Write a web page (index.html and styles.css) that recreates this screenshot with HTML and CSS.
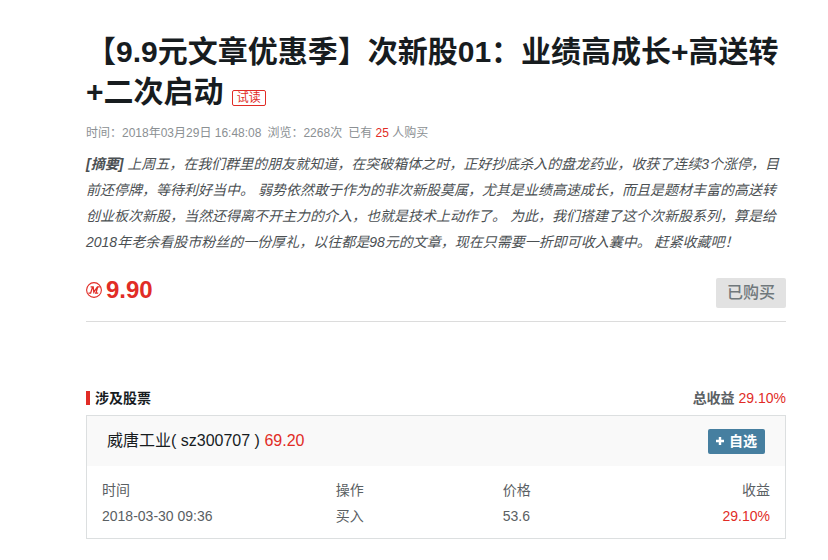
FILE: index.html
```html
<!DOCTYPE html>
<html lang="zh-CN">
<head>
<meta charset="utf-8">
<meta name="viewport" content="width=device-width, initial-scale=1">
<title>次新股01：业绩高成长+高送转+二次启动</title>
<link rel="stylesheet" href="styles.css">
</head>
<body>
<main class="page">
  <article class="article">
    <h1 class="title">【9.9元文章优惠季】次新股01：业绩高成长+高送转+二次启动 <span class="tag">试读</span></h1>
    <p class="meta"><span>时间：2018年03月29日 16:48:08</span><span>浏览：2268次</span><span>已有 <b class="count">25</b> 人购买</span></p>
    <p class="summary"><strong>[摘要]</strong> 上周五，在我们群里的朋友就知道，在突破箱体之时，正好抄底杀入的盘龙药业，收获了连续3个涨停，目前还停牌，等待利好当中。 弱势依然敢于作为的非次新股莫属，尤其是业绩高速成长，而且是题材丰富的高送转创业板次新股，当然还得离不开主力的介入，也就是技术上动作了。 为此，我们搭建了这个次新股系列，算是给2018年老余看股市粉丝的一份厚礼，以往都是98元的文章，现在只需要一折即可收入囊中。 赶紧收藏吧！</p>
    <div class="purchase">
      <div class="price">
        <svg class="coin" viewBox="0 0 16 16" aria-hidden="true">
          <circle cx="8" cy="8" r="7.4" fill="none" stroke="currentColor" stroke-width="1.1"/>
          <path d="M2.4 11.2h2.2L6.6 5M4.6 4.8h2.6l.6 5.4 3.6-5.4h2.4M11.6 5l-1.6 6.2M8.8 11.2h3.4" fill="none" stroke="currentColor" stroke-width="1.3"/>
        </svg>
        <span>9.90</span>
      </div>
      <button class="bought" type="button">已购买</button>
    </div>
  </article>
  <section class="stocks">
    <header class="stocks-head">
      <h2 class="stocks-title">涉及股票</h2>
      <p class="total"><strong>总收益</strong> <span class="up">29.10%</span></p>
    </header>
    <div class="card">
      <div class="card-head">
        <p class="stock">威唐工业( sz300707 ) <span class="up">69.20</span></p>
        <button class="add" type="button">
          <svg class="plus" viewBox="0 0 8 8" aria-hidden="true"><path d="M4 0v8M0 4h8" stroke="currentColor" stroke-width="2.4"/></svg>
          <span>自选</span>
        </button>
      </div>
      <div class="card-body">
        <table class="trades">
          <thead>
            <tr><th class="col-time" scope="col">时间</th><th class="col-action" scope="col">操作</th><th scope="col">价格</th><th class="gain" scope="col">收益</th></tr>
          </thead>
          <tbody>
            <tr><td>2018-03-30 09:36</td><td>买入</td><td>53.6</td><td class="gain up">29.10%</td></tr>
          </tbody>
        </table>
      </div>
    </div>
  </section>
</main>
</body>
</html>
```

FILE: styles.css
```css
* {
  box-sizing: border-box;
}

body {
  margin: 0;
  background: #fff;
  color: #5a6063;
  font: 14px/26px "Liberation Sans", "Noto Sans CJK SC", sans-serif;
  text-spacing-trim: space-all;
}

h1,
h2,
p {
  margin: 0;
}

button {
  border: 0;
  font-family: inherit;
}

.page {
  padding: 32px 42px 20px 86px;
}

.title {
  color: #171c1f;
  font-size: 30px;
  line-height: 40px;
}

.tag {
  display: inline-block;
  padding: 0 4px;
  border: 1px solid #e12c26;
  border-radius: 2px;
  color: #e12c26;
  font-size: 12px;
  font-weight: 400;
  line-height: 14px;
}

.meta {
  display: flex;
  gap: 6px;
  margin-top: 11px;
  color: #8b9093;
  font-size: 12px;
  line-height: 20px;
}

.count {
  color: #e12c26;
  font-weight: 400;
}

.summary {
  margin-top: 8px;
  color: #4b5053;
  font-style: italic;
}

.purchase {
  display: flex;
  align-items: flex-end;
  justify-content: space-between;
  margin-top: 17px;
  padding-bottom: 13px;
  border-bottom: 1px solid #dcdcdc;
}

.price {
  display: flex;
  align-items: center;
  gap: 4px;
  color: #e12c26;
  font-size: 24px;
  font-weight: 700;
  line-height: 36px;
}

.coin {
  width: 16px;
  height: 16px;
}

.bought {
  padding: 0 11px;
  border-radius: 2px;
  background: #e2e2e2;
  color: #70787b;
  font-size: 16px;
  font-weight: 500;
  line-height: 30px;
}

.stocks {
  margin-top: 63px;
}

.stocks-head {
  display: flex;
  align-items: center;
  justify-content: space-between;
  padding-bottom: 4px;
}

.stocks-title {
  padding-left: 5px;
  border-left: 4px solid #e12c26;
  color: #171c1f;
  font-size: 14px;
  line-height: 14px;
}

.up {
  color: #e12c26;
}

.card {
  border: 1px solid #dcdfe0;
}

.card-head {
  display: flex;
  align-items: center;
  justify-content: space-between;
  padding: 12px 20px;
  background: #f9f9f9;
}

.stock {
  color: #171c1f;
  font-size: 16px;
}

.add {
  display: flex;
  align-items: center;
  gap: 5px;
  padding: 0 8px;
  border-radius: 2px;
  background: #467fa0;
  color: #fff;
  font-size: 14px;
  font-weight: 700;
  line-height: 25px;
}

.plus {
  width: 8px;
  height: 8px;
}

.card-body {
  padding: 11px 15px 9px;
}

.trades {
  width: 100%;
  border-collapse: collapse;
  table-layout: fixed;
}

.trades th,
.trades td {
  padding: 0;
  font-weight: 400;
  text-align: left;
}

.trades .col-time {
  width: 35%;
}

.trades .col-action {
  width: 25%;
}

.trades .gain {
  text-align: right;
}
```
